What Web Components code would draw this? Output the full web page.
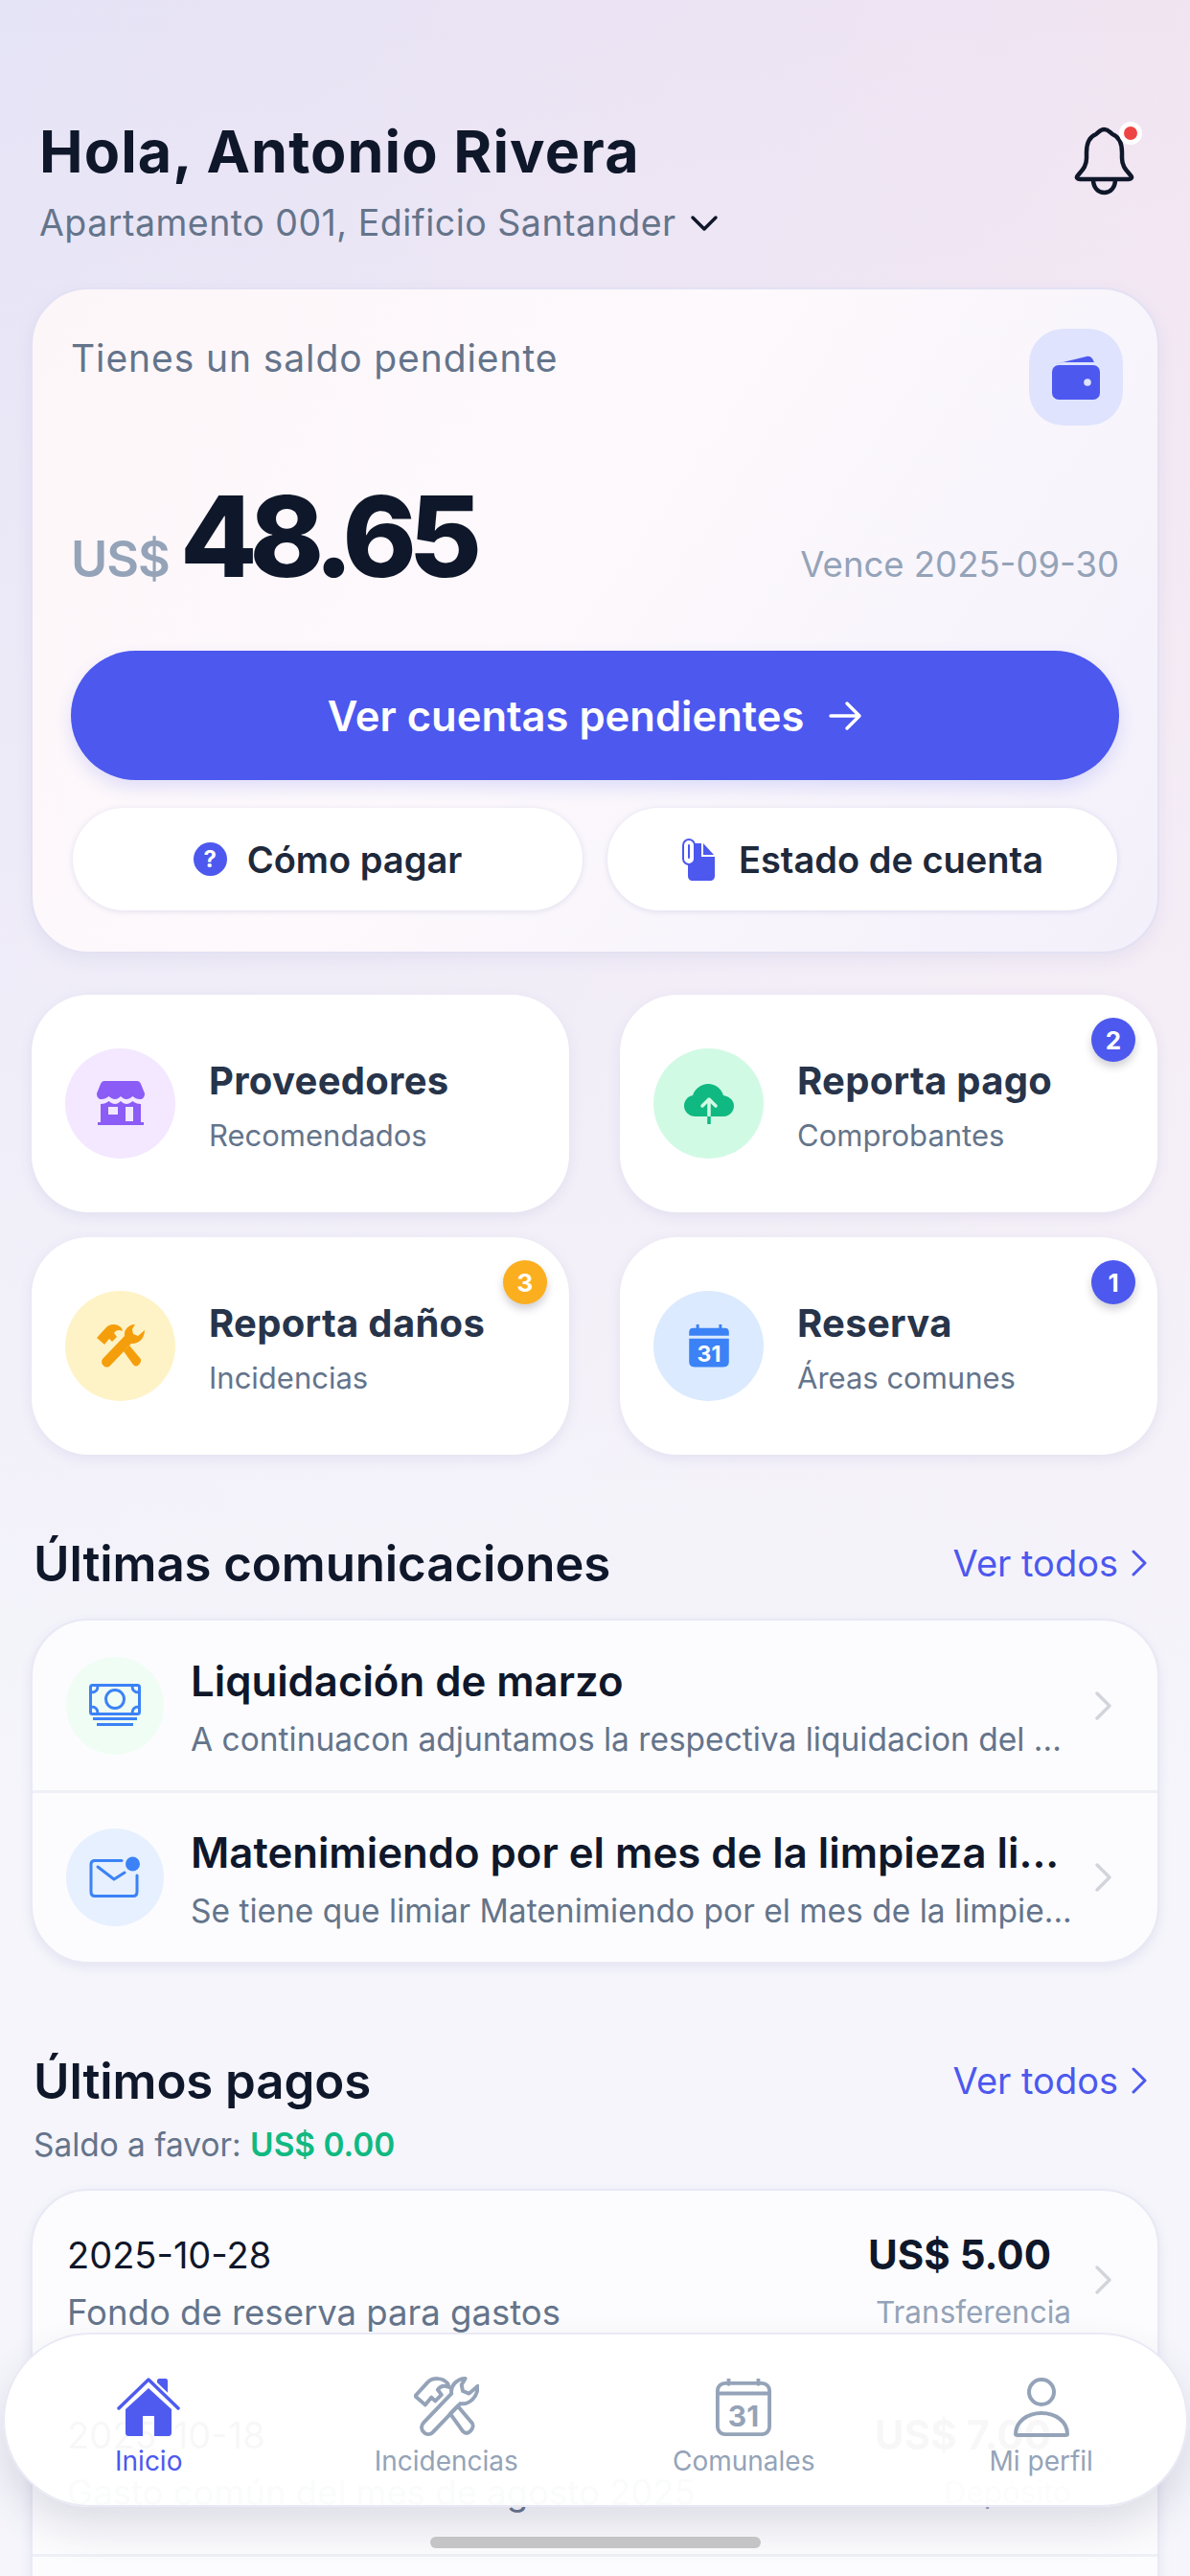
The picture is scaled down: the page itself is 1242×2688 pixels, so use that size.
<!DOCTYPE html>
<html lang="es">
<head>
<meta charset="utf-8">
<title>Inicio</title>
<style>
  html, body { margin: 0; padding: 0; }
  body {
    position: relative;
    width: 1242px;
    height: 2688px;
    overflow: hidden;
    font-family: Inter, "Liberation Sans", sans-serif;
    background:
      linear-gradient(180deg, rgba(245,245,251,0) 0, #f5f5fb 1900px),
      linear-gradient(105deg, #e5e3f6 0%, #f8e5ef 100%);
  }
  main { display: block; height: 2688px; overflow: hidden; box-sizing: border-box; padding: 0 32px; }
  svg { display: block; }
</style>
</head>
<body>
<main>
  <app-header>
    <span slot="title">Hola, Antonio Rivera</span>
    <span slot="unit">Apartamento 001, Edificio Santander</span>
  </app-header>

  <balance-card></balance-card>

  <tile-grid>
    <action-tile tint="#f3e8ff">
      <svg slot="icon" width="50" height="47" viewBox="0 0 50 47">
        <path d="M8 0H42C44 0 45 1 46 3L50 13C50 17 48 19 45 19C42 19 40 18 37.500 16C35 18 33 19 31 19C29 19 27 18 25 16C23 18 21 19 19 19C17 19 15 18 12.500 16C10 18 8 19 5 19C2 19 0 17 0 13L4 3C5 1 6 0 8 0Z" fill="#8b5cf6"/>
        <path d="M4 24C8 24 10 23 12.500 21C15 23 17 24 19 24C21 24 23 23 25 21C27 23 29 24 31 24C33 24 35 23 37.500 21C40 23 42 24 46 24V43H49V46H1V43H4Z" fill="#8b5cf6"/>
        <rect x="12" y="27" width="10" height="8" fill="#f3e8ff"/>
        <rect x="30" y="27" width="8" height="15" fill="#f3e8ff"/>
      </svg>
      <span slot="name">Proveedores</span>
      <span slot="sub">Recomendados</span>
    </action-tile>
    <action-tile tint="#d1fae5" badge="2">
      <svg slot="icon" width="54" height="44" viewBox="0 0 54 44">
        <path d="M13 35C6 35 1 30 1 24C1 18 5 14 10 13C12 6 19 1 26 1C34 1 40 6 42 13C48 14 53 18 53 24C53 30 48 35 42 35Z" fill="#10b981"/>
        <path d="M27 17V35M20 24L27 17L34 24" fill="none" stroke="#d1fae5" stroke-width="3.500" stroke-linecap="round" stroke-linejoin="round"/>
        <path d="M27 35V43" stroke="#10b981" stroke-width="3.500"/>
      </svg>
      <span slot="name">Reporta pago</span>
      <span slot="sub">Comprobantes</span>
    </action-tile>
    <action-tile tint="#fef3c7" badge="3" badge-color="#fbaf1f">
      <tools-icon slot="icon" size="52" color="#f59e0b"></tools-icon>
      <span slot="name">Reporta daños</span>
      <span slot="sub">Incidencias</span>
    </action-tile>
    <action-tile tint="#dbeafe" badge="1">
      <calendar-icon slot="icon" size="46" color="#3b82f6"></calendar-icon>
      <span slot="name">Reserva</span>
      <span slot="sub">Áreas comunes</span>
    </action-tile>
  </tile-grid>

  <section-head style="margin-top:82px">
    <span slot="title">Últimas comunicaciones</span>
  </section-head>

  <list-card style="margin-top:27px">
    <comm-row tint="#f0fdf4">
      <svg slot="icon" width="54" height="46" viewBox="0 0 54 46" fill="none" stroke="#3b82f6" stroke-width="3">
        <rect x="1.500" y="1.500" width="51" height="30" rx="2"/>
        <circle cx="27" cy="16" r="9.500"/>
        <path d="M2 9C7 9 9 7 9 2M45 2C45 7 47 9 52 9M2 24C7 24 9 26 9 31M45 31C45 26 47 24 52 24"/>
        <path d="M4 36.500H50M8 42.500H46"/>
      </svg>
      <span slot="title">Liquidación de marzo</span>
      <span slot="sub">A continuacon adjuntamos la respectiva liquidacion del ...</span>
    </comm-row>
    <comm-row tint="#e6f0fe" divided>
      <svg slot="icon" width="54" height="44" viewBox="0 0 54 44" fill="none" stroke="#3b82f6" stroke-width="3" stroke-linecap="round" stroke-linejoin="round">
        <path d="M34 4.500H6C3.500 4.500 2 6 2 8.500V37C2 40 3.500 41.500 6 41.500H46C48.500 41.500 50 40 50 37V20"/>
        <path d="M9 11L26 24L37 17"/>
        <circle cx="45.500" cy="8" r="7.500" fill="#3b82f6" stroke="none"/>
      </svg>
      <span slot="title">Matenimiendo por el mes de la limpieza li...</span>
      <span slot="sub">Se tiene que limiar Matenimiendo por el mes de la limpie...</span>
    </comm-row>
  </list-card>

  <section-head style="margin-top:91px">
    <span slot="title">Últimos pagos</span>
    <span slot="note">Saldo a favor: <span style="color:#10b981;font-weight:600">US$ 0.00</span></span>
  </section-head>

  <list-card style="margin-top:26px">
    <pay-row>
      <span slot="date">2025-10-28</span>
      <span slot="desc">Fondo de reserva para gastos</span>
      <span slot="amount">US$ 5.00</span>
      <span slot="method">Transferencia</span>
    </pay-row>
    <pay-row divided>
      <span slot="date">2025-10-18</span>
      <span slot="desc">Gasto común del mes de agosto 2025</span>
      <span slot="amount">US$ 7.00</span>
      <span slot="method">Depósito</span>
    </pay-row>
    <pay-row divided></pay-row>
  </list-card>
</main>

<tab-bar>
  <tab-item active>
    <svg slot="icon" width="66" height="62" viewBox="0 0 66 62">
      <path d="M42 8V3C42 2 43 1 44 1H51C52 1 53 2 53 3V18Z" fill="#4f5bef"/>
      <path d="M33 11L9 33V57C9 60 10 61 13 61H27V40H39V61H53C56 61 57 60 57 57V33Z" fill="#4f5bef"/>
      <path d="M2 32L33 2L64 32" fill="none" stroke="#fff" stroke-width="8"/>
      <path d="M2 32L33 2L64 32" fill="none" stroke="#4f5bef" stroke-width="3.500" stroke-linecap="round" stroke-linejoin="round"/>
    </svg>
    <span slot="label">Inicio</span>
  </tab-item>
  <tab-item>
    <tools-icon slot="icon" size="68" outline color="#94a3b8"></tools-icon>
    <span slot="label">Incidencias</span>
  </tab-item>
  <tab-item>
    <calendar-icon slot="icon" size="60" outline color="#94a3b8"></calendar-icon>
    <span slot="label">Comunales</span>
  </tab-item>
  <tab-item>
    <svg slot="icon" width="60" height="62" viewBox="0 0 60 62" fill="none" stroke="#94a3b8" stroke-width="4" stroke-linejoin="round">
      <circle cx="30" cy="15" r="13"/>
      <path d="M3 59C3 46 15 37 30 37C45 37 57 46 57 59C57 60 56 60 55 60H5C4 60 3 60 3 59Z"/>
    </svg>
    <span slot="label">Mi perfil</span>
  </tab-item>
</tab-bar>
<home-indicator></home-indicator>

<script>
class ShadowEl extends HTMLElement {
  constructor() {
    super();
    this.attachShadow({mode: 'open'});
  }
  connectedCallback() {
    this.shadowRoot.innerHTML = this.render();
  }
}

class AppHeader extends ShadowEl {
  render() {
    return `
    <style>
      :host { display: flex; justify-content: space-between; height: 300px; padding: 0 0 0 9px; box-sizing: border-box; }
      .title { margin-top: 122px; font-size: 61px; line-height: 72px; font-weight: 700; color: #0f172a; letter-spacing: 1.1px; }
      .unit { display: flex; align-items: center; gap: 14px; margin-top: 17px; font-size: 37.500px; line-height: 44px; color: #64748b; letter-spacing: 0.5px; }
      .bell { position: relative; margin: 125px 20px 0 0; width: 75px; height: 85px; }
      .dot { position: absolute; left: 53px; top: 2px; width: 14px; height: 14px; border-radius: 50%; background: #ef4444; border: 5px solid #fff; }
    </style>
    <div>
      <div class="title"><slot name="title"></slot></div>
      <div class="unit"><slot name="unit"></slot>
        <svg width="30" height="18" viewBox="0 0 30 18" fill="none" stroke="#0f172a" stroke-width="3.500" stroke-linecap="round" stroke-linejoin="round"><path d="M3 3L15 15L27 3"/></svg>
      </div>
    </div>
    <div class="bell">
      <svg width="75" height="85" viewBox="0 0 75 85" fill="none" stroke="#0f172a" stroke-width="4.500" stroke-linejoin="round">
        <path d="M37.500 10C33 10 32 13 29 15C21 18 19 25 19 34V40C19 49 14 53 10 58C8 60 9 62 12 62H63C66 62 67 60 65 58C61 53 56 49 56 40V34C56 25 54 18 46 15C43 13 42 10 37.500 10Z"/>
        <path d="M26 62C26 71 31 76 37.500 76C44 76 49 71 49 62"/>
      </svg>
      <span class="dot"></span>
    </div>`;
  }
}

class BalanceCard extends ShadowEl {
  render() {
    return `
    <style>
      :host { display: block; height: 695px; box-sizing: border-box; padding: 41px 38px 0 40px; border: 2px solid #e3e1f3; border-radius: 60px;
        background: linear-gradient(125deg, #fdf6f9 0%, #fdf9fc 45%, #f3f0fb 100%), #fff;
        box-shadow: 0 6px 18px rgba(90, 90, 170, .08); }
      .top { display: flex; justify-content: space-between; height: 147px; }
      .lead { margin-top: 8px; font-size: 39px; line-height: 46px; color: #64748b; letter-spacing: 0.9px; }
      .wallet { display: flex; align-items: center; justify-content: center; width: 98px; height: 101px; margin-right: -2px; border-radius: 36px; background: #dfe3fd; }
      .amount { display: flex; align-items: baseline; justify-content: space-between; height: 189px; }
      .left { display: flex; align-items: baseline; gap: 11px; }
      .cur { font-size: 52px; font-weight: 600; color: #94a3b8; letter-spacing: -1px; }
      .num { font-size: 117px; line-height: 140px; font-weight: 800; color: #0f172a; letter-spacing: -8px; }
      .due { font-size: 36.500px; color: #94a3b8; margin-right: 2px; }
      .main { display: flex; align-items: center; justify-content: center; gap: 25px; height: 135px; margin-right: 2px; border-radius: 68px; background: #4c58ee; color: #fff; font-size: 43.500px; font-weight: 600; box-shadow: 0 8px 18px rgba(76, 88, 238, .16); }
      .row { display: grid; grid-template-columns: 1fr 1fr; gap: 26px; margin: 29px 4px 0 2px; }
      .sec { display: flex; align-items: center; justify-content: center; gap: 21px; height: 107px; border-radius: 54px; background: #fff; color: #1e293b; font-size: 38px; font-weight: 600; box-shadow: 0 1px 6px rgba(90, 90, 170, .16); }
      .q { display: flex; align-items: center; justify-content: center; width: 35px; height: 35px; border-radius: 50%; background: #4c58ee; color: #fff; font-size: 24px; font-weight: 700; }
      .sec + .sec { gap: 24px; }
    </style>
    <div class="top">
      <div class="lead">Tienes un saldo pendiente</div>
      <div class="wallet">
        <svg width="50" height="46" viewBox="0 0 50 46">
          <path d="M3 9L36 1C39 0 42 2 43 5L44 7H12Z" fill="#4c58ee"/>
          <rect x="0" y="10" width="50" height="36" rx="7" fill="#4c58ee"/>
          <path d="M13 8.500H41" stroke="#dfe3fd" stroke-width="2"/>
          <circle cx="37" cy="28" r="3.800" fill="#dfe3fd"/>
        </svg>
      </div>
    </div>
    <div class="amount">
      <div class="left"><span class="cur">US$</span><span class="num">48.65</span></div>
      <div class="due">Vence 2025-09-30</div>
    </div>
    <div class="main">Ver cuentas pendientes
      <svg width="36" height="32" viewBox="0 0 36 32" fill="none" stroke="#fff" stroke-width="3.500" stroke-linecap="round" stroke-linejoin="round"><path d="M3 16H33M20 3L33 16L20 29"/></svg>
    </div>
    <div class="row">
      <div class="sec"><span class="q">?</span>Cómo pagar</div>
      <div class="sec">
        <svg width="36" height="46" viewBox="0 0 36 46">
          <path d="M7 6H21V20H35V40C35 43 33 45 30 45H12C9 45 7 43 7 40Z" fill="#4c58ee"/>
          <path d="M23 6L34 18H23Z" fill="#4c58ee"/>
          <rect x="2" y="2" width="12" height="26" rx="6" fill="#fff" stroke="#4c58ee" stroke-width="2"/>
          <path d="M8 8V21" stroke="#4c58ee" stroke-width="2" stroke-linecap="round"/>
        </svg>
        Estado de cuenta
      </div>
    </div>`;
  }
}

class TileGrid extends ShadowEl {
  render() {
    return `
    <style>
      :host { display: grid; grid-template-columns: 561px 561px; justify-content: space-between; grid-auto-rows: 227px; gap: 26px 53px; margin: 43px 2px 0 1px; }
    </style>
    <slot></slot>`;
  }
}

class ActionTile extends ShadowEl {
  render() {
    const badge = this.getAttribute('badge');
    const color = this.getAttribute('badge-color') || '#4c58ee';
    return `
    <style>
      :host { position: relative; display: flex; align-items: center; gap: 35px; padding: 0 35px; border-radius: 60px; background: #fff; box-shadow: 0 4px 14px rgba(90, 90, 170, .10); }
      .icon { display: flex; align-items: center; justify-content: center; flex: none; width: 115px; height: 115px; border-radius: 50%; background: ${this.getAttribute('tint')}; }
      .text { padding-top: 5px; }
      .name { font-size: 40px; line-height: 48px; font-weight: 700; color: #27344a; letter-spacing: 0.3px; }
      .sub { margin-top: 14px; font-size: 31px; line-height: 38px; color: #64748b; }
      .badge { position: absolute; top: 24px; right: 23px; display: flex; align-items: center; justify-content: center; width: 46px; height: 46px; border-radius: 50%; background: ${color}; color: #fff; font-size: 26px; font-weight: 700; box-shadow: 0 5px 9px rgba(40, 40, 70, .22); }
    </style>
    <div class="icon"><slot name="icon"></slot></div>
    <div class="text">
      <div class="name"><slot name="name"></slot></div>
      <div class="sub"><slot name="sub"></slot></div>
    </div>
    ${badge ? `<span class="badge">${badge}</span>` : ''}`;
  }
}

class ToolsIcon extends ShadowEl {
  render() {
    const size = this.getAttribute('size');
    const color = this.getAttribute('color');
    const paint = this.hasAttribute('outline')
      ? `fill="none" stroke="${color}" stroke-width="3" stroke-linejoin="round"`
      : `fill="${color}"`;
    return `
    <style>:host { display: block; } svg { display: block; }</style>
    <svg width="${size}" height="${size}" viewBox="0 0 52 52" ${paint}>
      <path d="M41 3C34 3 29 9 30 15L8 38C5 41 6 44 8 46C10 48 13 48 15 46L37 23C44 24 51 18 51 9L44 15L39 13L38 8Z"/>
      <path d="M1 17L11 6C15 2 23 2 27 7L28 10C24 8 21 9 19 12L22 16L17 21L14 18L9 24Z"/>
      <path d="M29 31L35 25L46 38C48 40 47 43 45 45C43 47 41 47 39 45Z"/>
    </svg>`;
  }
}

class CalendarIcon extends ShadowEl {
  render() {
    const size = this.getAttribute('size');
    const color = this.getAttribute('color');
    const outline = this.hasAttribute('outline');
    const body = outline
      ? `<rect x="2" y="5" width="56" height="55" rx="8" fill="none" stroke="${color}" stroke-width="4"/>
         <path d="M3 16H57" stroke="${color}" stroke-width="4"/>`
      : `<path d="M2 16V11C2 7 4 5 8 5H52C56 5 58 7 58 11V16Z" fill="${color}"/>
         <path d="M2 20H58V52C58 57 56 60 50 60H10C4 60 2 57 2 52Z" fill="${color}"/>`;
    return `
    <style>:host { display: block; } svg { display: block; }</style>
    <svg width="${size}" height="${size}" viewBox="0 0 60 62">
      <path d="M14 1V6M46 1V6" stroke="${color}" stroke-width="4" stroke-linecap="round"/>
      ${body}
      <text x="30" y="52" text-anchor="middle" font-family="Inter, sans-serif" font-size="31" font-weight="700" fill="${outline ? color : '#fff'}">31</text>
    </svg>`;
  }
}

class SectionHead extends ShadowEl {
  render() {
    return `
    <style>
      :host { display: block; padding: 0 13px 0 3px; }
      .row { display: flex; align-items: center; justify-content: space-between; height: 62px; }
      .title { font-size: 51px; font-weight: 600; color: #0f172a; letter-spacing: -0.1px; }
      .more { display: flex; align-items: center; gap: 14px; font-size: 38px; color: #4c58ee; }
      .note { margin-top: 16px; font-size: 33.400px; line-height: 40px; color: #64748b; }
    </style>
    <div class="row">
      <div class="title"><slot name="title"></slot></div>
      <div class="more">Ver todos
        <svg width="16" height="30" viewBox="0 0 16 30" fill="none" stroke="#4c58ee" stroke-width="3" stroke-linecap="round" stroke-linejoin="round"><path d="M2 3L14 15L2 27"/></svg>
      </div>
    </div>
    ${this.querySelector('[slot=note]') ? '<div class="note"><slot name="note"></slot></div>' : ''}`;
  }
}

class ListCard extends ShadowEl {
  render() {
    return `
    <style>
      :host { display: block; border: 2px solid #e9e9f5; border-radius: 60px; background: #fcfcfe; box-shadow: 0 4px 12px rgba(90, 90, 170, .10); }
    </style>
    <slot></slot>`;
  }
}

const chevron = `<svg width="20" height="32" viewBox="0 0 20 32" fill="none" stroke="#d1d5db" stroke-width="3.500" stroke-linecap="round" stroke-linejoin="round"><path d="M4 3L17 16L4 29"/></svg>`;

class CommRow extends ShadowEl {
  render() {
    return `
    <style>
      :host { display: flex; align-items: center; gap: 28px; height: 177px; padding: 0 47px 0 35px; box-sizing: border-box; }
      :host([divided]) { height: 179px; border-top: 3px solid #eff0f7; }
      .icon { display: flex; align-items: center; justify-content: center; flex: none; width: 102px; height: 102px; border-radius: 50%; background: ${this.getAttribute('tint')}; }
      .text { flex: 1; min-width: 0; padding-top: 4px; white-space: nowrap; }
      .title { font-size: 43.700px; line-height: 52px; font-weight: 600; color: #0f172a; }
      .sub { margin-top: 14px; font-size: 33.500px; line-height: 40px; color: #64748b; }
    </style>
    <div class="icon"><slot name="icon"></slot></div>
    <div class="text">
      <div class="title"><slot name="title"></slot></div>
      <div class="sub"><slot name="sub"></slot></div>
    </div>
    ${chevron}`;
  }
}

class PayRow extends ShadowEl {
  render() {
    return `
    <style>
      :host { display: flex; align-items: center; height: 187px; padding: 7px 47px 0 36px; box-sizing: border-box; }
      :host([divided]) { height: 192px; padding: 4px 47px 3px 36px; border-top: 3px solid #eff0f7; }
      .col { flex: 1; }
      .date { font-size: 38px; line-height: 44px; color: #0f172a; }
      .desc { margin-top: 16px; font-size: 36.500px; line-height: 44px; color: #64748b; }
      .end { text-align: right; margin-right: 23px; white-space: nowrap; }
      .amount { font-size: 42px; line-height: 44px; font-weight: 700; color: #0f172a; margin-right: 21px; }
      .method { margin-top: 16px; font-size: 31.500px; line-height: 44px; color: #94a3b8; }
      svg { margin-top: -8px; }
    </style>
    <div class="col">
      <div class="date"><slot name="date"></slot></div>
      <div class="desc"><slot name="desc"></slot></div>
    </div>
    <div class="end">
      <div class="amount"><slot name="amount"></slot></div>
      <div class="method"><slot name="method"></slot></div>
    </div>
    ${chevron}`;
  }
}

class TabBar extends ShadowEl {
  render() {
    return `
    <style>
      /* lies over the payment list */
      :host { position: absolute; left: 3px; right: 2px; top: 2434px; height: 182px; box-sizing: border-box; padding-top: 45px; border: 2px solid #e9e9f5; border-radius: 91px; background: rgba(255, 255, 255, .97); box-shadow: 0 22px 40px rgba(70, 70, 110, .16); }
      .tabs { display: grid; grid-template-columns: repeat(4, 310.500px); margin: 0 0 0 -5px; }
    </style>
    <div class="tabs"><slot></slot></div>`;
  }
}

class TabItem extends ShadowEl {
  render() {
    const color = this.hasAttribute('active') ? '#4c58ee' : '#94a3b8';
    return `
    <style>
      :host { display: flex; flex-direction: column; align-items: center; }
      .icon { display: flex; align-items: center; justify-content: center; height: 62px; }
      .label { margin-top: 7px; font-size: 28px; line-height: 36px; color: ${color}; }
    </style>
    <div class="icon"><slot name="icon"></slot></div>
    <div class="label"><slot name="label"></slot></div>`;
  }
}

class HomeIndicator extends ShadowEl {
  render() {
    return `
    <style>
      /* system bar on top of everything */
      :host { position: absolute; left: 449px; top: 2647px; width: 345px; height: 12px; border-radius: 6px; background: #c4c4c6; }
    </style>`;
  }
}

customElements.define('app-header', AppHeader);
customElements.define('balance-card', BalanceCard);
customElements.define('tile-grid', TileGrid);
customElements.define('action-tile', ActionTile);
customElements.define('tools-icon', ToolsIcon);
customElements.define('calendar-icon', CalendarIcon);
customElements.define('section-head', SectionHead);
customElements.define('list-card', ListCard);
customElements.define('comm-row', CommRow);
customElements.define('pay-row', PayRow);
customElements.define('tab-bar', TabBar);
customElements.define('tab-item', TabItem);
customElements.define('home-indicator', HomeIndicator);
</script>
</body>
</html>
